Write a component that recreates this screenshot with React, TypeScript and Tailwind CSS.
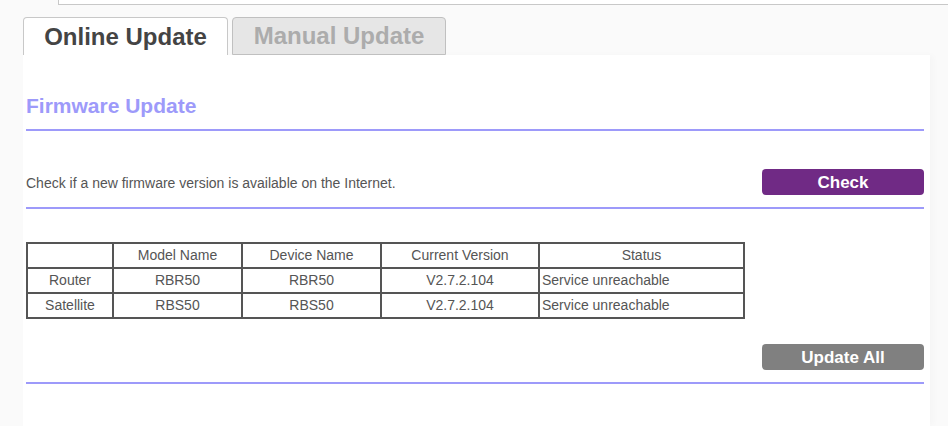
import React from "react";

const font = { fontFamily: '"Liberation Sans", Arial, sans-serif' };

const headers = ["", "Model Name", "Device Name", "Current Version", "Status"];
const rows = [
  ["Router", "RBR50", "RBR50", "V2.7.2.104", "Service unreachable"],
  ["Satellite", "RBS50", "RBS50", "V2.7.2.104", "Service unreachable"],
];

export default function App() {
  return (
    <div
      className="w-[948px] h-[426px] overflow-hidden bg-[#fafafa] text-[#555]"
      style={font}
    >
      <div className="ml-[58px] h-[5px] border-l border-b border-[#c8c8c8] bg-white" />
      <div className="mt-[12px] ml-[23px] flex gap-[4px] items-end">
        <div className="w-[205px] h-[38px] bg-white border border-b-0 border-[#c8c8c8] rounded-t-[4px] flex items-center justify-center text-[24px] font-bold text-[#444]">
          Online Update
        </div>
        <div className="w-[214px] h-[38px] bg-[#e6e6e6] border border-[#c0c0c0] rounded-t-[4px] flex items-center justify-center text-[24px] font-bold text-[#acacac]">
          Manual Update
        </div>
      </div>
      <div className="ml-[23px] w-[907px] h-[371px] bg-white pt-[38px] pl-[3px] pr-[6px] flex flex-col shadow-[4px_0_6px_rgba(0,0,0,0.02)]">
        <div className="h-[38px] shrink-0 border-b-2 border-[#9d9afa] pt-[1px] text-[21px] leading-[24px] font-bold text-[#9d9afa]">
          Firmware Update
        </div>
        <div className="mt-[38px] h-[26px] shrink-0 flex items-center justify-between">
          <span className="text-[14px] mt-[2px]">
            Check if a new firmware version is available on the Internet.
          </span>
          <button className="w-[162px] h-[26px] rounded-[4px] bg-[#702a85] text-white text-[17px] font-bold pt-[2px] leading-[24px]">
            Check
          </button>
        </div>
        <div className="mt-[12px] h-[2px] shrink-0 bg-[#9d9afa]" />
        <div className="mt-[33px] w-[719px] grid grid-cols-[84px_127px_137px_156px_203px] gap-[2px] p-[2px] bg-[#555] text-[14px]">
          {headers.map((h, i) => (
            <div key={"h" + i} className="h-[23px] bg-white flex items-center justify-center">
              {h}
            </div>
          ))}
          {rows.map((r, ri) =>
            r.map((c, ci) => (
              <div
                key={ri + "-" + ci}
                className={
                  ci === 4
                    ? "h-[23px] bg-white flex items-center pl-[2px]"
                    : "h-[23px] bg-white flex items-center justify-center"
                }
              >
                {c}
              </div>
            ))
          )}
        </div>
        <div className="mt-[25px] flex justify-end shrink-0">
          <button className="w-[162px] h-[26px] rounded-[4px] bg-[#808080] text-white text-[17px] font-bold pt-[2px] leading-[24px]">
            Update All
          </button>
        </div>
        <div className="mt-[12px] h-[2px] shrink-0 bg-[#9d9afa]" />
      </div>
    </div>
  );
}
